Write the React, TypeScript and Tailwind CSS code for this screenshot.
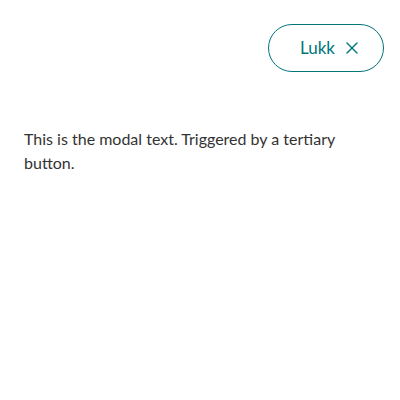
import { X } from 'lucide-react';

export default function App() {
  return (
    <div className="w-[400px] h-[400px] bg-white font-['Lato',sans-serif] text-[#333333]">
      <div className="flex justify-end pt-6 pr-4">
        <button className="flex items-center gap-[7px] h-12 pl-[31px] pr-[21px] rounded-full border border-[#00757a] text-[#00757a] text-[17px]">
          Lukk
          <X size={20} strokeWidth={1.6} />
        </button>
      </div>
      <p className="px-6 pt-[55px] text-[16px] leading-6">
        This is the modal text. Triggered by a tertiary button.
      </p>
    </div>
  );
}
